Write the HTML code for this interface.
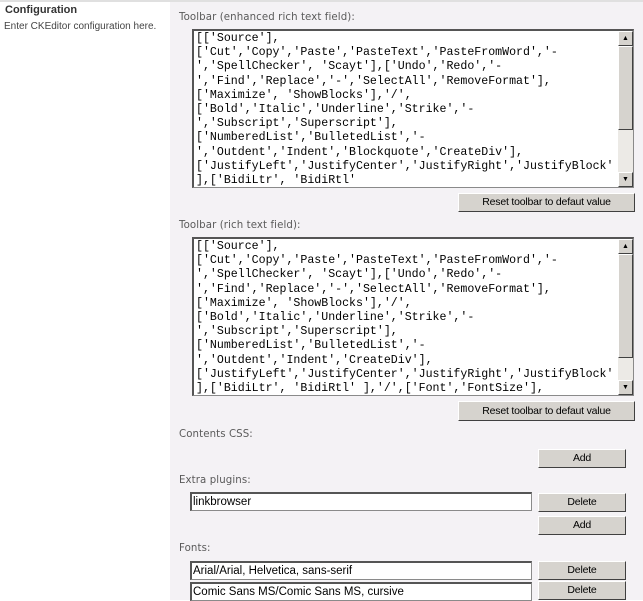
<!DOCTYPE html>
<html><head><style>
body{margin:0;width:643px;height:600px;overflow:hidden;background:#fff;font-family:"Liberation Sans",sans-serif;position:relative}
.a{position:absolute}
#right{left:170px;top:2px;width:473px;height:598px;background:#f4f2f5}
.lbl{font-size:10.2px;color:#5a5a5a;font-family:"DejaVu Sans",sans-serif;letter-spacing:0.1px}
.ta{background:#fff;border:1px solid #8a8a8a;border-top:2px solid #555;border-left:2px solid #555;box-sizing:border-box}
.code{position:absolute;left:2px;top:1px;font-family:"Liberation Mono",monospace;font-size:11.6px;line-height:14.2px;white-space:pre;color:#000}
.sb{position:absolute;right:0;top:0;width:15px;bottom:0;background:#eceae6}
.arr{position:absolute;left:0;width:15px;height:15px;background:#d6d3ce;border:1px solid;border-color:#fff #404040 #404040 #fff;box-sizing:border-box;text-align:center}
.thumb{position:absolute;left:0;width:15px;background:#d6d3ce;border:1px solid;border-color:#fff #404040 #404040 #fff;box-sizing:border-box}
.btn{background:#d6d3ce;border:1px solid;border-color:#fff #404040 #404040 #fff;box-sizing:border-box;font-size:10.5px;font-family:"Liberation Sans",sans-serif;text-align:center;color:#000;letter-spacing:-0.2px}
.inp{background:#fff;border:1px solid #8a8a8a;border-top:2px solid #555;border-left:2px solid #555;box-sizing:border-box;font-size:11.5px;font-family:"Liberation Sans",sans-serif;padding-left:1px;padding-top:1px;line-height:15px}
</style></head><body>
<div class="a" style="left:0;top:0;width:643px;height:2px;background:#e0e0e0"></div>
<div id="right" class="a"></div>
<div class="a" style="left:5px;top:4px;font-size:11px;font-weight:bold;color:#333">Configuration</div>
<div class="a" style="left:4px;top:21px;font-size:10px;color:#444">Enter CKEditor configuration here.</div>

<div class="a lbl" style="left:179px;top:12px">Toolbar (enhanced rich text field):</div>
<div class="a ta" style="left:192px;top:29px;width:442px;height:159px;overflow:hidden">
<div class="code">[['Source'],
['Cut','Copy','Paste','PasteText','PasteFromWord','-
','SpellChecker', 'Scayt'],['Undo','Redo','-
','Find','Replace','-','SelectAll','RemoveFormat'],
['Maximize', 'ShowBlocks'],'/',
['Bold','Italic','Underline','Strike','-
','Subscript','Superscript'],
['NumberedList','BulletedList','-
','Outdent','Indent','Blockquote','CreateDiv'],
['JustifyLeft','JustifyCenter','JustifyRight','JustifyBlock'
],['BidiLtr', 'BidiRtl'</div>
<div class="sb"><div class="arr" style="top:0;font-size:7px;line-height:13px">▲</div><div class="thumb" style="top:15px;height:84px"></div><div class="arr" style="bottom:0;font-size:7px;line-height:13px">▼</div></div>
</div>
<div class="a btn" style="left:458px;top:193px;width:177px;height:19px;line-height:17px">Reset toolbar to defaut value</div>

<div class="a lbl" style="left:179px;top:220px">Toolbar (rich text field):</div>
<div class="a ta" style="left:192px;top:237px;width:442px;height:159px;overflow:hidden">
<div class="code">[['Source'],
['Cut','Copy','Paste','PasteText','PasteFromWord','-
','SpellChecker', 'Scayt'],['Undo','Redo','-
','Find','Replace','-','SelectAll','RemoveFormat'],
['Maximize', 'ShowBlocks'],'/',
['Bold','Italic','Underline','Strike','-
','Subscript','Superscript'],
['NumberedList','BulletedList','-
','Outdent','Indent','CreateDiv'],
['JustifyLeft','JustifyCenter','JustifyRight','JustifyBlock'
],['BidiLtr', 'BidiRtl' ],'/',['Font','FontSize'],</div>
<div class="sb"><div class="arr" style="top:0;font-size:7px;line-height:13px">▲</div><div class="thumb" style="top:15px;height:104px"></div><div class="arr" style="bottom:0;font-size:7px;line-height:13px">▼</div></div>
</div>
<div class="a btn" style="left:458px;top:401px;width:177px;height:20px;line-height:18px">Reset toolbar to defaut value</div>

<div class="a lbl" style="left:179px;top:429px">Contents CSS:</div>
<div class="a btn" style="left:538px;top:449px;width:88px;height:19px;line-height:17px">Add</div>

<div class="a lbl" style="left:179px;top:475px">Extra plugins:</div>
<div class="a inp" style="left:190px;top:492px;width:342px;height:19px">linkbrowser</div>
<div class="a btn" style="left:538px;top:493px;width:88px;height:19px;line-height:17px">Delete</div>
<div class="a btn" style="left:538px;top:516px;width:88px;height:19px;line-height:17px">Add</div>

<div class="a lbl" style="left:179px;top:543px">Fonts:</div>
<div class="a inp" style="left:190px;top:561px;width:342px;height:19px">Arial/Arial, Helvetica, sans-serif</div>
<div class="a btn" style="left:538px;top:561px;width:88px;height:19px;line-height:17px">Delete</div>
<div class="a inp" style="left:190px;top:582px;width:342px;height:19px">Comic Sans MS/Comic Sans MS, cursive</div>
<div class="a btn" style="left:538px;top:581px;width:88px;height:19px;line-height:17px">Delete</div>
</body></html>
